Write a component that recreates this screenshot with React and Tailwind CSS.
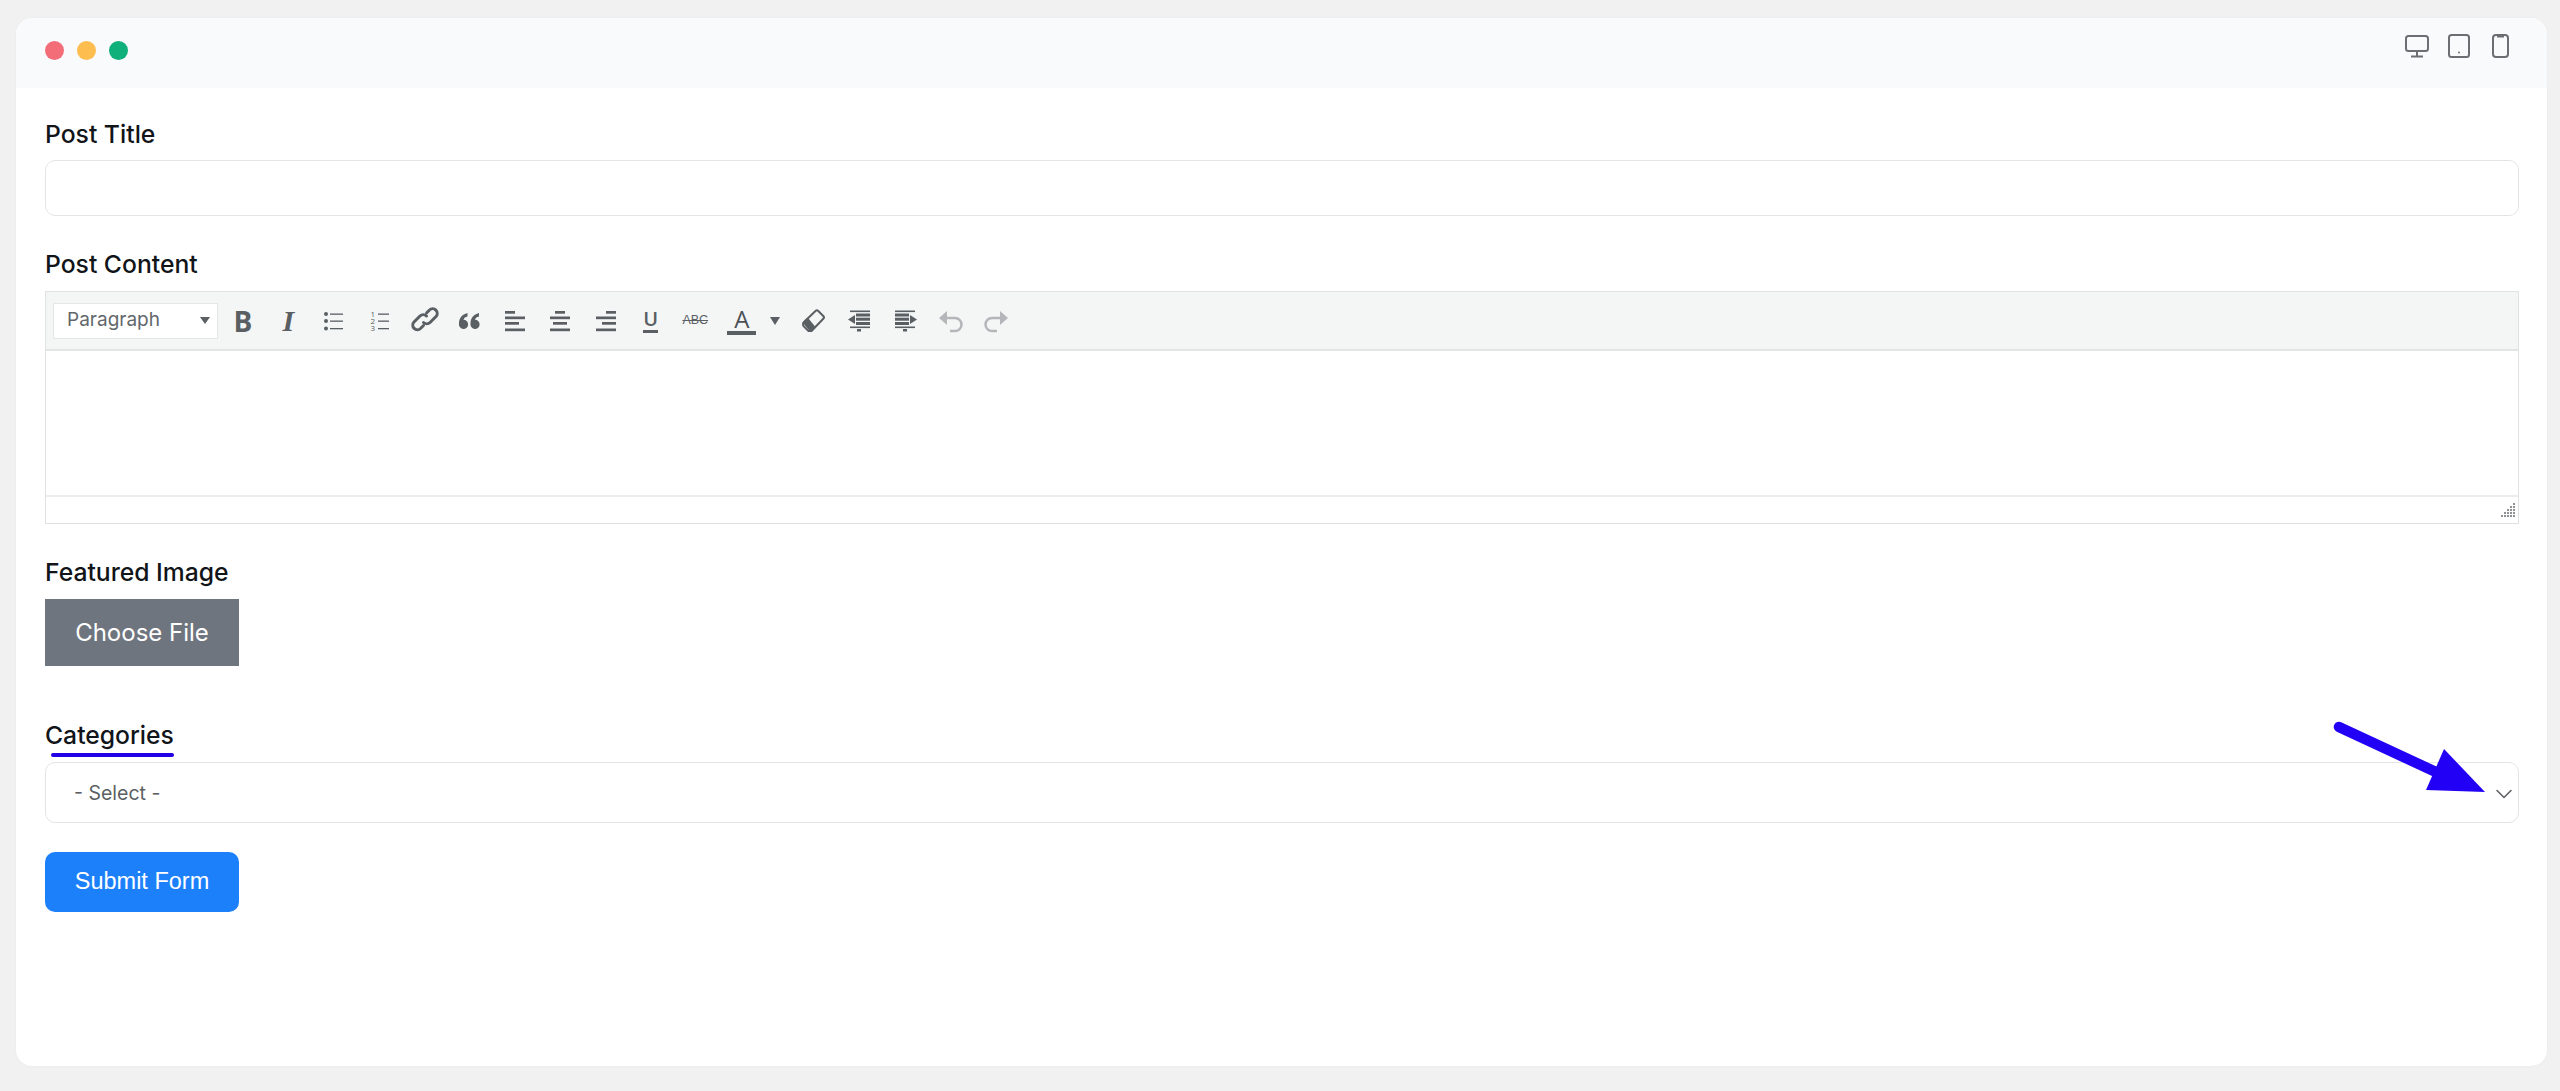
import { ChevronDown } from 'lucide-react'

const Label = ({ children, className = '' }) => (
    <label className={`block text-[24.700px] leading-[30px] font-medium text-[#111418] ${className}`}>{children}</label>
)

const Icon = ({ children, color = '#595f63' }) => (
    <svg viewBox="0 0 32 32" className="w-8 h-8" fill={color} stroke="none">
        {children}
    </svg>
)

const Lines = ({ rows, h = 2.7 }) => rows.map(([x, y, w], i) => <rect key={i} x={x} y={y} width={w} height={h} />)

const Tool = ({ children, className = 'w-[45.6px]' }) => (
    <div className={`flex items-center justify-center h-8 shrink-0 ${className}`}>{children}</div>
)

const DeviceIcons = () => (
    <div className="flex items-start text-[#6b6e72]">
        <svg viewBox="0 0 24 24" className="w-[24px] h-[24px]" fill="none" stroke="currentColor" strokeWidth="2">
            <rect x="1" y="2" width="22" height="15" rx="2.5" />
            <path d="M12 17v5M6 22.500h12" />
        </svg>
        <svg viewBox="0 0 22 24" className="w-[22px] h-[24px] ml-[19px]" fill="none" stroke="currentColor" strokeWidth="2">
            <rect x="1" y="1" width="20" height="22" rx="2.5" />
            <circle cx="11" cy="18.500" r="1" fill="currentColor" stroke="none" />
        </svg>
        <svg viewBox="0 0 17 24" className="w-[17px] h-[24px] ml-[22px]" fill="none" stroke="currentColor" strokeWidth="2">
            <rect x="1" y="1" width="15" height="22" rx="3" />
            <path d="M5 2h7" strokeWidth="3" />
        </svg>
    </div>
)

const Toolbar = () => (
    <div className="flex items-center h-[59px] bg-[#f4f6f6] border-b-2 border-[#e2e4e5] pl-[7px] font-['Open_Sans',sans-serif] text-[#595f63]">
        <div className="flex items-center justify-between w-[165px] h-[36px] bg-white border border-[#e4e6e7] pl-[13px] pr-[7px] font-['Inter',sans-serif] text-[19px] text-[#62676b] mr-[2px]">
            <span>Paragraph</span>
            <span className="w-0 h-0 border-x-[5px] border-x-transparent border-t-[7px] border-t-[#595f63]" />
        </div>
        <Tool><span className="font-bold text-[28px] leading-none">B</span></Tool>
        <Tool><span className="font-['Liberation_Serif',serif] italic font-bold text-[30px] leading-none">I</span></Tool>
        <Tool>
            <Icon>
                <circle cx="8" cy="9" r="2" /><circle cx="8" cy="16" r="2" /><circle cx="8" cy="23.500" r="2" />
                <Lines rows={[[12, 8.500, 13], [12, 15.500, 13], [12, 23, 13]]} h={1.300} />
            </Icon>
        </Tool>
        <Tool>
            <Icon>
                <text x="6.500" y="11.500" fontSize="8" fontFamily="Open Sans">1</text>
                <text x="6.500" y="18.500" fontSize="8" fontFamily="Open Sans">2</text>
                <text x="6.500" y="26" fontSize="8" fontFamily="Open Sans">3</text>
                <Lines rows={[[14, 8.500, 11], [14, 15.500, 11], [14, 23, 11]]} h={1.300} />
            </Icon>
        </Tool>
        <Tool>
            <svg viewBox="0 0 32 32" className="w-8 h-8" fill="none" stroke="#595f63" strokeWidth="3" strokeLinecap="round">
                <path d="M14.500 20.500l-3 3a4.600 4.600 0 0 1-6.500-6.500l6-6a4.600 4.600 0 0 1 6.500 0" />
                <path d="M14.500 17.500a4.600 4.600 0 0 0 6.500 0l6-6a4.600 4.600 0 0 0-6.500-6.500l-3 3" />
            </svg>
        </Tool>
        <Tool className="w-[44px]">
            <Icon>
                <path d="M5 18.500C5 13 8 9.500 13.500 8v3.500c-2.500 .7-3.700 1.800-4 3.300A4.600 4.600 0 1 1 5 18.500z" />
                <path d="M16.500 18.500c0-5.500 3-9 8.500-10.500v3.500c-2.500 .7-3.700 1.800-4 3.300a4.600 4.600 0 1 1-4.500 3.700z" />
            </Icon>
        </Tool>
        <Tool><Icon><Lines rows={[[6, 6, 10], [6, 11.500, 20], [6, 17, 14], [6, 23.500, 20]]} /></Icon></Tool>
        <Tool><Icon><Lines rows={[[11, 6, 10], [6, 11.500, 20], [9, 17, 14], [6, 23.500, 20]]} /></Icon></Tool>
        <Tool><Icon><Lines rows={[[16, 6, 10], [6, 11.500, 20], [12, 17, 14], [6, 23.500, 20]]} /></Icon></Tool>
        <Tool className="w-[44px]">
            <div className="flex flex-col items-center text-[20px] leading-[20px] font-semibold">
                U<span className="w-[15px] h-[3px] bg-[#595f63] mt-[1px]" />
            </div>
        </Tool>
        <Tool className="w-[49px]"><span className="text-[12.500px] line-through font-['Liberation_Sans',sans-serif] -ml-[4px]">ABC</span></Tool>
        <Tool className="w-[40px]">
            <div className="flex flex-col items-center text-[24px] leading-[24px] text-[#4d5256]">
                A<span className="w-[29px] h-[4px] bg-[#595f63]" />
            </div>
        </Tool>
        <Tool className="w-[26px]"><span className="w-0 h-0 border-x-[5px] border-x-transparent border-t-[8px] border-t-[#595f63]" /></Tool>
        <Tool className="w-[50px]">
            <svg viewBox="0 0 32 32" className="w-8 h-8" fill="none" stroke="#595f63" strokeWidth="2" strokeLinejoin="round">
                <path d="M7 17 18.500 6a2 2 0 0 1 2.800 0l5 5a2 2 0 0 1 0 2.800L14.500 26H11.500l-4.500-4.500a3 3 0 0 1 0-4.500z" />
                <path d="M7 17.500l7 8.500 3.500-3.500-7-8.500z" fill="#595f63" />
            </svg>
        </Tool>
        <Tool className="w-[45px]">
            <Icon>
                <Lines rows={[[6, 5.500, 20], [6, 21.500, 20]]} h={1.600} />
                <Lines rows={[[12, 8.500, 14], [12, 12.700, 14], [12, 17, 14]]} h={3} />
                <path d="M4 14.500l7-4.500v9z" />
                <rect x="13" y="24" width="4" height="2.500" />
            </Icon>
        </Tool>
        <Tool className="w-[45px]">
            <Icon>
                <Lines rows={[[6, 5.500, 20], [6, 21.500, 20]]} h={1.600} />
                <Lines rows={[[6, 8.500, 14], [6, 12.700, 14], [6, 17, 14]]} h={3} />
                <path d="M28 14.500l-7-4.500v9z" />
                <rect x="14" y="24" width="4" height="2.500" />
            </Icon>
        </Tool>
        <Tool>
            <svg viewBox="0 0 32 32" className="w-8 h-8" fill="none" stroke="#b4b7b9" strokeWidth="2.500">
                <path d="M10 13h10a6.500 6.500 0 0 1 0 13h-5" />
                <path d="M12 6v14L4 13z" fill="#b4b7b9" stroke="none" />
            </svg>
        </Tool>
        <Tool>
            <svg viewBox="0 0 32 32" className="w-8 h-8" fill="none" stroke="#b4b7b9" strokeWidth="2.500">
                <path d="M22 13H12a6.500 6.500 0 0 0 0 13h5" />
                <path d="M20 6v14l8-7z" fill="#b4b7b9" stroke="none" />
            </svg>
        </Tool>
    </div>
)

const Grip = () => (
    <svg viewBox="0 0 14 14" className="w-[14px] h-[14px]" fill="#8f9193">
        {[[12, 0], [12, 3], [9, 3], [12, 6], [9, 6], [6, 6], [12, 9], [9, 9], [6, 9], [3, 9], [12, 12], [9, 12], [6, 12], [3, 12], [0, 12]].map(([x, y]) => (
            <rect key={`${x}-${y}`} x={x} y={y} width="2" height="2" />
        ))}
    </svg>
)

export default function App() {
    return (
        <div className="min-h-[1091px] bg-[#f1f1f1] pt-[18px] pl-4 pr-[13px] pb-[25px] font-['Inter',sans-serif]">
            <div className="relative h-[1048px] bg-white rounded-[16px] shadow-[0_0_3px_rgba(0,0,0,0.04)] overflow-hidden">
                <div className="flex justify-between h-[70px] bg-[#f9fafb] pl-[29px] pr-[38px]">
                    <div className="flex items-center gap-[13px] pb-[6px]">
                        <span className="w-[19px] h-[19px] rounded-full bg-[#f26d78]" />
                        <span className="w-[19px] h-[19px] rounded-full bg-[#fdbd4f]" />
                        <span className="w-[19px] h-[19px] rounded-full bg-[#0fb07a]" />
                    </div>
                    <div className="pt-[16px]"><DeviceIcons /></div>
                </div>

                <div className="pl-[29px] pr-[28px] pt-[31px]">
                    <Label>Post Title</Label>
                    <div className="h-[56px] mt-[11px] bg-white border border-[#e3e4e6] rounded-[10px]" />

                    <Label className="mt-[33px]">Post Content</Label>
                    <div className="mt-[12px] border border-[#dfe1e2]">
                        <Toolbar />
                        <div className="h-[144px] bg-white" />
                        <div className="flex items-center justify-end h-[28px] border-t-2 border-[#eceded] pr-[3px]">
                            <Grip />
                        </div>
                    </div>

                    <Label className="mt-[33px]">Featured Image</Label>
                    <button className="block w-[194px] h-[67px] mt-[12px] bg-[#6f757e] text-white text-[24px]">Choose File</button>

                    <Label className="mt-[54px]">Categories</Label>
                    <div className="flex items-center justify-between h-[61px] mt-[12px] pl-[28px] pt-[2px] bg-white border border-[#e3e4e6] rounded-[10px] text-[19.500px] text-[#5b5f63]">
                        <span>- Select -</span>
                        <ChevronDown className="w-[28px] h-[28px] text-[#5b5f63]" strokeWidth={1.300} />
                    </div>

                    <button className="block w-[194px] h-[60px] mt-[29px] bg-[#1c80fb] text-white font-['Liberation_Sans',sans-serif] text-[23.500px] rounded-[10px]">Submit Form</button>
                </div>

                {/* annotation drawn over the form */}
                <span className="absolute left-[35px] top-[735px] w-[123px] h-[4px] rounded-full bg-[#2200e6]" />
                <svg className="absolute left-[2310px] top-[690px]" width="180" height="110" viewBox="0 0 180 110">
                    <path d="M13 19 112 65" stroke="#2200f5" strokeWidth="10.500" strokeLinecap="round" fill="none" />
                    <path d="M118 41 159 84 100 82z" fill="#2200f5" />
                </svg>
            </div>
        </div>
    )
}
